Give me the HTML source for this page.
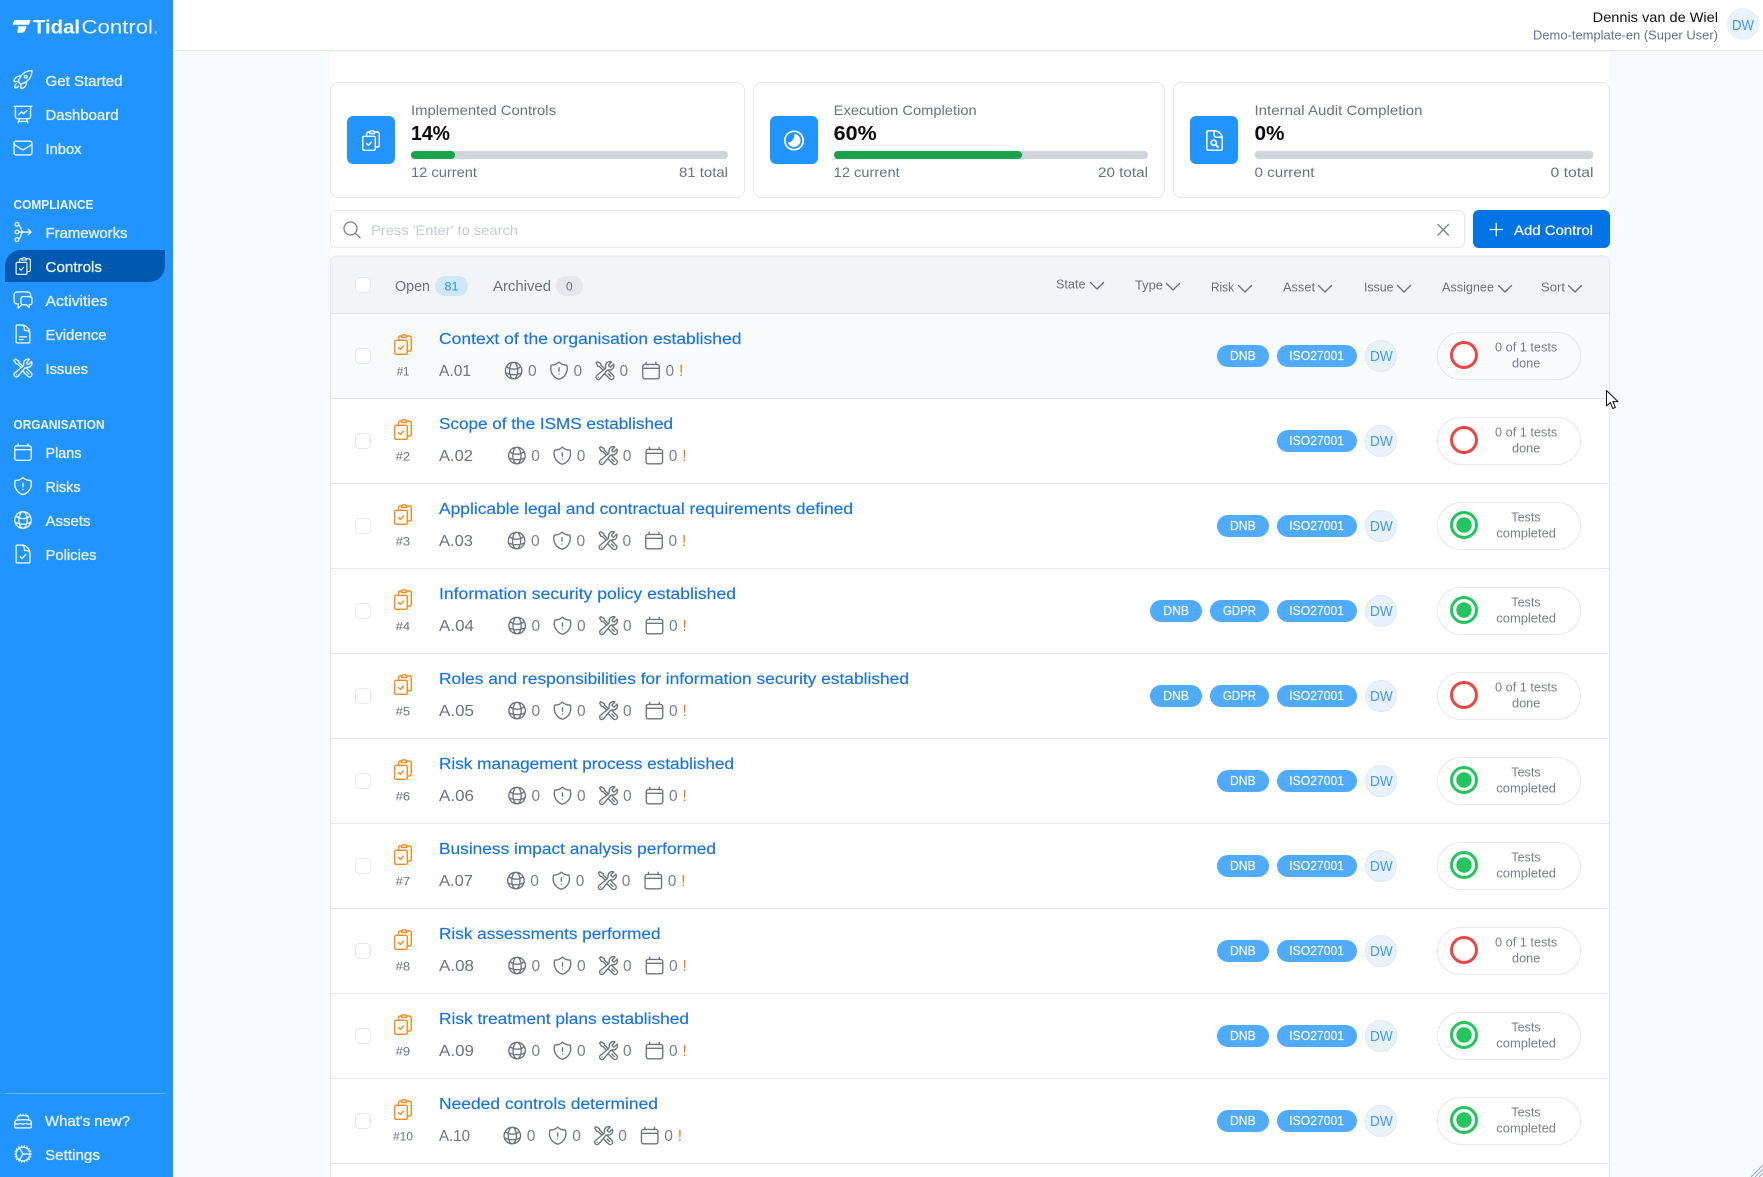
<!DOCTYPE html>
<html lang="en"><head><meta charset="utf-8"><title>TidalControl - Controls</title>
<style>
html,body{margin:0;padding:0;width:1763px;height:1177px;overflow:hidden;background:#f7fbff}
svg{display:block}
text{font-family:"Liberation Sans",sans-serif}
.i{fill:none;stroke:currentColor;stroke-width:1.5;stroke-linecap:round;stroke-linejoin:round}
.s{font-size:14.5px;fill:#e4f2ff;stroke:#e4f2ff;stroke-width:.35}
.h{font-size:12.5px;font-weight:700;fill:#eef7ff}
.lb{font-size:14px;fill:#6b7280}
.pc{font-size:20px;font-weight:700;fill:#0b0b0f}
.fl{font-size:12.5px;fill:#6b7280}
.tt{font-size:15.5px;fill:#1873e6;stroke:#1873e6;stroke-width:.15}
.cd{font-size:16px;fill:#6b7280}
.nm{font-size:12px;fill:#6b7280}
.z{font-size:15.5px;fill:#7a808c}
.o{font-size:15.5px;fill:#f97316}
.tg{font-size:12.5px;fill:#fff;stroke:#fff;stroke-width:.15}
.dw{font-size:15px;fill:#3b9bff}
.st{font-size:12.5px;fill:#7b7f87}
</style></head><body>
<svg xmlns="http://www.w3.org/2000/svg" width="1763" height="1177" viewBox="0 0 1763 1177">
<defs>
<symbol id="clip" viewBox="0 0 18 21" overflow="visible"><g fill="none" stroke="currentColor" stroke-width="1.4" stroke-linecap="round" stroke-linejoin="round"><rect x=".7" y="6.3" width="12.6" height="14" rx="1.4"/><path d="M4.6 6V3.6C4.6 2.7 5.3 2 6.2 2h1.5C8.1 1.2 9 .7 10 .7s1.9.5 2.3 1.3h3.1c1 0 1.9.7 1.9 1.6v11.8c0 .9-.9 1.6-1.9 1.6h-2"/><path d="M7.6 2v1.6h4.9V2"/><path d="M4.6 13.6l1.8 1.8 3-3.3" stroke-width="1.5"/></g></symbol>
<symbol id="rocket" viewBox="0 0 24 24"><path d="M15.59 14.37a6 6 0 0 1-5.84 7.38v-4.8m5.84-2.58a14.98 14.98 0 0 0 6.16-12.12A14.98 14.98 0 0 0 9.631 8.41m5.96 5.96a14.926 14.926 0 0 1-5.841 2.58m-.119-8.54a6 6 0 0 0-7.381 5.84h4.8m2.581-5.84a14.927 14.927 0 0 0-2.58 5.84m2.699 2.7c-.103.021-.207.041-.311.06a15.09 15.09 0 0 1-2.448-2.448 14.9 14.9 0 0 1 .06-.312m-2.24 2.39a4.493 4.493 0 0 0-1.757 4.306 4.493 4.493 0 0 0 4.306-1.758M16.5 9a1.5 1.5 0 1 1-3 0 1.5 1.5 0 0 1 3 0Z" class="i"/></symbol>
<symbol id="chart" viewBox="0 0 24 24"><path d="M3.75 3v11.25A2.25 2.25 0 0 0 6 16.5h2.25M3.75 3h-1.5m1.5 0h16.5m0 0h1.5m-1.5 0v11.25A2.25 2.25 0 0 1 18 16.5h-2.25m-7.5 0h7.5m-7.5 0-1 3m8.5-3 1 3m0 0 .5 1.5m-.5-1.5h-9.5m0 0-.5 1.5m.75-9 3-3 2.148 2.148A12.061 12.061 0 0 1 16.5 7.605" class="i"/></symbol>
<symbol id="env" viewBox="0 0 24 24"><path d="M21.75 6.75v10.5a2.25 2.25 0 0 1-2.25 2.25h-15a2.25 2.25 0 0 1-2.25-2.25V6.75m19.5 0A2.25 2.25 0 0 0 19.5 4.5h-15a2.25 2.25 0 0 0-2.25 2.25m19.5 0v.243a2.25 2.25 0 0 1-1.07 1.916l-7.5 4.615a2.25 2.25 0 0 1-2.36 0L3.32 8.91a2.25 2.25 0 0 1-1.07-1.916V6.75" class="i"/></symbol>
<symbol id="fw" viewBox="0 0 24 24"><g class="i"><circle cx="6.5" cy="3.6" r="2"/><circle cx="6.5" cy="12" r="2"/><circle cx="6.5" cy="20.4" r="2"/><path d="M8.3 4.6c3.4 1.4 2.2 7.4 5.2 7.4M8.3 19.4c3.4-1.4 2.2-7.4 5.2-7.4M8.5 12h13.3m-3-3 3 3-3 3"/></g></symbol>
<symbol id="chat" viewBox="0 0 24 24"><path d="M20.25 8.511c.884.284 1.5 1.128 1.5 2.097v4.286c0 1.136-.847 2.1-1.98 2.193-.34.027-.68.052-1.02.072v3.091l-3-3c-1.354 0-2.694-.055-4.02-.163a2.115 2.115 0 0 1-.825-.242m9.345-8.334a2.126 2.126 0 0 0-.476-.095 48.64 48.64 0 0 0-8.048 0c-1.131.094-1.976 1.057-1.976 2.192v4.286c0 .837.46 1.58 1.155 1.951m9.345-8.334V6.637c0-1.621-1.152-3.026-2.76-3.235A48.455 48.455 0 0 0 11.25 3c-2.115 0-4.198.137-6.24.402-1.608.209-2.76 1.614-2.76 3.235v6.226c0 1.621 1.152 3.026 2.76 3.235.577.075 1.157.14 1.74.194V21l4.155-4.155" class="i"/></symbol>
<symbol id="doc" viewBox="0 0 24 24"><path d="M19.5 14.25v-2.625a3.375 3.375 0 0 0-3.375-3.375h-1.5A1.125 1.125 0 0 1 13.5 7.125v-1.5a3.375 3.375 0 0 0-3.375-3.375H8.25m0 12.75h7.5m-7.5 3H12M10.5 2.25H5.625c-.621 0-1.125.504-1.125 1.125v17.25c0 .621.504 1.125 1.125 1.125h12.75c.621 0 1.125-.504 1.125-1.125V11.25a9 9 0 0 0-9-9Z" class="i"/></symbol>
<symbol id="doccheck" viewBox="0 0 24 24"><path d="M19.5 14.25v-2.625a3.375 3.375 0 0 0-3.375-3.375h-1.5A1.125 1.125 0 0 1 13.5 7.125v-1.5a3.375 3.375 0 0 0-3.375-3.375M9 15l2 2 4-4.5M10.5 2.25H5.625c-.621 0-1.125.504-1.125 1.125v17.25c0 .621.504 1.125 1.125 1.125h12.75c.621 0 1.125-.504 1.125-1.125V11.25a9 9 0 0 0-9-9Z" class="i"/></symbol>
<symbol id="tools" viewBox="0 0 24 24"><path d="M11.42 15.17 17.25 21A2.652 2.652 0 0 0 21 17.25l-5.877-5.877M11.42 15.17l2.496-3.03c.317-.384.74-.626 1.208-.766M11.42 15.17l-4.655 5.653a2.548 2.548 0 1 1-3.586-3.586l6.837-5.63m5.108-.233c.55-.164 1.163-.188 1.743-.14a4.5 4.5 0 0 0 4.486-6.336l-3.276 3.277a3.004 3.004 0 0 1-2.25-2.25l3.276-3.276a4.5 4.5 0 0 0-6.336 4.486c.091 1.076-.071 2.264-.904 2.95l-.102.085m-1.745 1.437L5.909 7.5H4.5L2.25 3.75l1.5-1.5L7.5 4.5v1.409l4.26 4.26m-1.745 1.437 1.745-1.437m6.615 8.206L15.75 15.75M4.867 19.125h.008v.008h-.008v-.008Z" class="i"/></symbol>
<symbol id="cal" viewBox="0 0 24 24"><path d="M6.75 3v2.25M17.25 3v2.25M3 18.75V7.5a2.25 2.25 0 0 1 2.25-2.25h13.5A2.25 2.25 0 0 1 21 7.5v11.25A2.25 2.25 0 0 1 18.75 21H5.25A2.25 2.25 0 0 1 3 18.75ZM3 9.5h18" class="i"/></symbol>
<symbol id="shield" viewBox="0 0 24 24"><path d="M12 9v3.75m0-10.036A11.959 11.959 0 0 1 3.598 6 11.99 11.99 0 0 0 3 9.75c0 5.592 3.824 10.29 9 11.622 5.176-1.332 9-6.03 9-11.622 0-1.31-.21-2.571-.598-3.751h-.152c-3.196 0-6.1-1.25-8.25-3.285Zm0 13.036h.008v.008H12v-.008Z" class="i"/></symbol>
<symbol id="globe" viewBox="0 0 24 24"><path d="M12 21a9.004 9.004 0 0 0 8.716-6.747M12 21a9.004 9.004 0 0 1-8.716-6.747M12 21c2.485 0 4.5-4.03 4.5-9S14.485 3 12 3m0 18c-2.485 0-4.5-4.03-4.5-9S9.515 3 12 3m0 0a8.997 8.997 0 0 1 7.843 4.582M12 3a8.997 8.997 0 0 0-7.843 4.582m15.686 0A11.953 11.953 0 0 1 12 10.5c-2.998 0-5.74-1.1-7.843-2.918m15.686 0A8.959 8.959 0 0 1 21 12c0 .778-.099 1.533-.284 2.253m0 0A17.919 17.919 0 0 1 12 16.5c-3.162 0-6.133-.815-8.716-2.247m0 0A9.004 9.004 0 0 1 3 12c0-1.605.42-3.113 1.157-4.418" class="i"/></symbol>
<symbol id="cake" viewBox="0 0 24 24"><path d="M12 8.25v-1.5m0 1.5c-1.355 0-2.697.056-4.024.166C6.845 8.51 6 9.473 6 10.608v2.513m6-4.871c1.355 0 2.697.056 4.024.166C17.155 8.51 18 9.473 18 10.608v2.513M15 8.25v-1.5m-6 1.5v-1.5m12 9.75-1.5.75a3.354 3.354 0 0 1-3 0 3.354 3.354 0 0 0-3 0 3.354 3.354 0 0 1-3 0 3.354 3.354 0 0 0-3 0 3.354 3.354 0 0 1-3 0L3 16.5m15-3.379a48.474 48.474 0 0 0-6-.371c-2.032 0-4.034.126-6 .371m12 0c.39.049.777.102 1.163.16 1.07.16 1.837 1.094 1.837 2.175v5.169c0 .621-.504 1.125-1.125 1.125H4.125A1.125 1.125 0 0 1 3 20.625v-5.17c0-1.08.768-2.014 1.837-2.174A47.78 47.78 0 0 1 6 13.12" class="i"/></symbol>
<symbol id="cog" viewBox="0 0 24 24"><path d="M4.5 12a7.5 7.5 0 0 0 15 0m-15 0a7.5 7.5 0 1 1 15 0m-15 0H3m16.5 0H21m-1.5 0H12m-8.457 3.077 1.41-.513m14.095-5.13 1.41-.513M5.106 17.785l1.15-.964m11.49-9.642 1.149-.964M7.501 19.795l.75-1.3m7.5-12.99.75-1.3m-6.063 16.658.26-1.477m2.605-14.772.26-1.477m0 17.726-.26-1.477M10.698 4.614l-.26-1.477M16.5 19.794l-.75-1.299M7.5 4.205 12 12m6.894 5.785-1.149-.964M6.256 7.178l-1.15-.964m15.352 8.864-1.41-.513M4.954 9.435l-1.41-.514M12.002 12l-3.75 6.495" class="i"/></symbol>
<g id="rowbase">
<rect x="355.5" y="35.5" width="15" height="15" rx="4" fill="#fff" stroke="#e5e7eb"/>
<use href="#clip" x="394" y="21" width="18" height="21" color="#f98a1e"/>
<rect x="1365.5" y="27.5" width="31" height="31" rx="15.5" fill="#e9f1fc" stroke="#e2e8f0"/>
<rect x="1437.5" y="19.5" width="143" height="47" rx="23.5" fill="none" stroke="#e5e7eb"/>
</g>
<g id="mi" color="#6f7580">
<use href="#globe" x="502.6" y="46.6" width="22" height="22"/>
<use href="#shield" x="548" y="46.6" width="22" height="22"/>
<use href="#tools" x="594" y="46.6" width="22" height="22"/>
<use href="#cal" x="640" y="46.6" width="22" height="22"/>
</g>
<g id="red"><circle cx="1464" cy="42" r="12.5" fill="#fff" stroke="#ef4444" stroke-width="3"/></g>
<g id="grn"><circle cx="1464" cy="42" r="12.5" fill="#fff" stroke="#22c55e" stroke-width="3"/><circle cx="1464" cy="42" r="7.7" fill="#22c55e"/></g>
<g id="tdnb"><rect x="1217" y="32" width="52" height="22" rx="11" fill="#4fabff"/></g>
<g id="tdnb2"><rect x="1150" y="32" width="52" height="22" rx="11" fill="#4fabff"/></g>
<g id="tgdpr"><rect x="1210" y="32" width="59" height="22" rx="11" fill="#4fabff"/></g>
<g id="tiso"><rect x="1277" y="32" width="80" height="22" rx="11" fill="#4fabff"/></g>
</defs>

<rect width="1763" height="1177" fill="#f7fbff"/>
<rect x="330" y="50" width="1280" height="1127" fill="#fefefe"/>
<rect x="173" y="0" width="1590" height="50" fill="#fff"/>
<rect x="173" y="50" width="1590" height="1" fill="#e5e7eb"/>
<rect x="173" y="51" width="1590" height="1" fill="#f3f4f6"/>
<text x="1592.7" y="22" font-size="14" fill="#111" textLength="125.3" lengthAdjust="spacingAndGlyphs">Dennis van de Wiel</text>
<text x="1533" y="39.5" font-size="12.5" fill="#6b7280" textLength="185" lengthAdjust="spacingAndGlyphs">Demo-template-en (Super User)</text>
<circle cx="1743" cy="24" r="16" fill="#e9f1fc"/>
<text x="1732" y="30" class="dw" textLength="22" lengthAdjust="spacingAndGlyphs">DW</text>

<rect width="173" height="1177" fill="#2294ff"/>
<path d="M15.5 20h14.3c.5 0 .8.4.6.9l-1.2 3.1c-.2.5-.6.8-1.1.8H13.2c-.5 0-.8-.4-.6-.9l1.5-2.9c.3-.6.8-1 1.4-1ZM18.3 26.2h7.6c.4 0 .7.4.5.8l-1.1 3c-.5 1.6-1.8 2.7-3.3 2.7h-4.2c-.4 0-.7-.4-.5-.8l1-5.700Z" fill="#fff"/>
<text x="33" y="33.5" font-size="19.5" font-weight="700" fill="#fff" textLength="47" lengthAdjust="spacingAndGlyphs">Tidal</text>
<text x="81.5" y="33.5" font-size="19.5" fill="#eef7ff" textLength="71.5" lengthAdjust="spacingAndGlyphs">Control</text>
<text x="153" y="33.5" font-size="19.5" fill="#a9d5ff">.</text>
<path d="M5 266a16 16 0 0 1 16-16h144v16a16 16 0 0 1-16 16H5Z" fill="#0059b0"/>
<g color="#e8f4ff">
<use href="#rocket" x="12" y="68.5" width="22" height="22"/>
<use href="#chart" x="12" y="103.5" width="22" height="22"/>
<use href="#env" x="12" y="137" width="22" height="22"/>
<use href="#fw" x="11" y="221" width="22" height="22"/>
<use href="#clip" x="15.5" y="257" width="15.5" height="18"/>
<use href="#chat" x="12" y="289" width="22" height="22"/>
<use href="#doc" x="12" y="323" width="22" height="22"/>
<use href="#tools" x="12" y="357" width="22" height="22"/>
<use href="#cal" x="12" y="441" width="22" height="22"/>
<use href="#shield" x="12" y="475" width="22" height="22"/>
<use href="#globe" x="12" y="509" width="22" height="22"/>
<use href="#doccheck" x="12" y="543" width="22" height="22"/>
<use href="#cake" x="12" y="1108" width="22" height="22"/>
<use href="#cog" x="12" y="1143" width="22" height="22"/>
</g>
<text x="45.5" y="86" class="s" textLength="77" lengthAdjust="spacingAndGlyphs">Get Started</text>
<text x="45.5" y="120" class="s" textLength="73" lengthAdjust="spacingAndGlyphs">Dashboard</text>
<text x="45.5" y="154" class="s" textLength="36" lengthAdjust="spacingAndGlyphs">Inbox</text>
<text x="13.5" y="209" class="h" textLength="80" lengthAdjust="spacingAndGlyphs">COMPLIANCE</text>
<text x="45.5" y="238" class="s" textLength="82" lengthAdjust="spacingAndGlyphs">Frameworks</text>
<text x="45.5" y="272" class="s" textLength="56.5" lengthAdjust="spacingAndGlyphs">Controls</text>
<text x="45.5" y="306" class="s" textLength="62" lengthAdjust="spacingAndGlyphs">Activities</text>
<text x="45.5" y="340" class="s" textLength="61" lengthAdjust="spacingAndGlyphs">Evidence</text>
<text x="45.5" y="374" class="s" textLength="42.5" lengthAdjust="spacingAndGlyphs">Issues</text>
<text x="13.5" y="429" class="h" textLength="91" lengthAdjust="spacingAndGlyphs">ORGANISATION</text>
<text x="45.5" y="458" class="s" textLength="36" lengthAdjust="spacingAndGlyphs">Plans</text>
<text x="45.5" y="492" class="s" textLength="35" lengthAdjust="spacingAndGlyphs">Risks</text>
<text x="45.5" y="526" class="s" textLength="45" lengthAdjust="spacingAndGlyphs">Assets</text>
<text x="45.5" y="560" class="s" textLength="51" lengthAdjust="spacingAndGlyphs">Policies</text>
<rect x="5" y="1093" width="160" height="1" fill="#fff" fill-opacity=".3"/>
<text x="45" y="1126" class="s" textLength="85" lengthAdjust="spacingAndGlyphs">What's new?</text>
<text x="45" y="1160" class="s" textLength="55" lengthAdjust="spacingAndGlyphs">Settings</text>

<rect x="330.5" y="82.5" width="414" height="115" rx="8" fill="#fff" stroke="#e5e7eb"/>
<rect x="347" y="116" width="48" height="48" rx="6" fill="#2294ff"/>
<use href="#clip" x="362" y="130" width="18" height="21" color="#fff"/>
<text x="411" y="115" class="lb" textLength="145" lengthAdjust="spacingAndGlyphs">Implemented Controls</text>
<text x="411" y="140" class="pc" textLength="39" lengthAdjust="spacingAndGlyphs">14%</text>
<rect x="411" y="151" width="317" height="8" rx="4" fill="#d1d5db"/>
<rect x="411" y="151" width="44" height="8" rx="4" fill="#16a34a"/>
<text x="411" y="177" class="lb" textLength="66" lengthAdjust="spacingAndGlyphs">12 current</text>
<text x="679" y="177" class="lb" textLength="49" lengthAdjust="spacingAndGlyphs">81 total</text>

<rect x="753.5" y="82.5" width="411" height="115" rx="8" fill="#fff" stroke="#e5e7eb"/>
<rect x="770" y="116" width="48" height="48" rx="6" fill="#2294ff"/>
<circle cx="794" cy="140.5" r="9.2" fill="none" stroke="#fff" stroke-width="1.7"/>
<path d="M794.5 134a6.5 6.5 0 1 1-6.7 8.4c3.6.4 6.9-3.6 6.7-8.4Z" fill="#fff"/>
<text x="833.7" y="115" class="lb" textLength="143" lengthAdjust="spacingAndGlyphs">Execution Completion</text>
<text x="833.7" y="140" class="pc" textLength="43" lengthAdjust="spacingAndGlyphs">60%</text>
<rect x="834" y="151" width="314" height="8" rx="4" fill="#d1d5db"/>
<rect x="834" y="151" width="188" height="8" rx="4" fill="#16a34a"/>
<text x="833.7" y="177" class="lb" textLength="66" lengthAdjust="spacingAndGlyphs">12 current</text>
<text x="1098" y="177" class="lb" textLength="50" lengthAdjust="spacingAndGlyphs">20 total</text>

<rect x="1173.5" y="82.5" width="436" height="115" rx="8" fill="#fff" stroke="#e5e7eb"/>
<rect x="1190" y="116" width="48" height="48" rx="6" fill="#2294ff"/>
<g fill="none" stroke="#fff" stroke-width="1.5" stroke-linecap="round" stroke-linejoin="round"><path d="M1214 130.8h-5.7c-.9 0-1.5.6-1.5 1.5v16.4c0 .9.6 1.5 1.5 1.5h12.4c.9 0 1.500-.6 1.500-1.5v-10.400c0-4.500-3.700-7.500-8.200-7.500Z"/><path d="M1214 130.8v4c0 1.400 1.100 2.500 2.500 2.500h5.500"/><circle cx="1213.8" cy="142.8" r="2.6" stroke-width="1.7"/><path d="M1216 145l2.300 2.300" stroke-width="1.7"/></g>
<text x="1254.5" y="115" class="lb" textLength="168" lengthAdjust="spacingAndGlyphs">Internal Audit Completion</text>
<text x="1254.5" y="140" class="pc" textLength="30" lengthAdjust="spacingAndGlyphs">0%</text>
<rect x="1254.5" y="151" width="339" height="8" rx="4" fill="#d1d5db"/>
<text x="1254.5" y="177" class="lb" textLength="60" lengthAdjust="spacingAndGlyphs">0 current</text>
<text x="1550.5" y="177" class="lb" textLength="43" lengthAdjust="spacingAndGlyphs">0 total</text>

<rect x="330.5" y="210.5" width="1134" height="37" rx="6" fill="#fff" stroke="#e5e7eb"/>
<g fill="none" stroke="#7a808c" stroke-width="1.3" stroke-linecap="round"><circle cx="350.5" cy="228.5" r="6.5"/><path d="M355.3 233.3l4.700 4.200"/><path d="M1438 224.500l10.500 10.500M1448.500 224.500l-10.500 10.500"/></g>
<text x="371" y="235" font-size="14" fill="#c6cad1" textLength="147" lengthAdjust="spacingAndGlyphs">Press 'Enter' to search</text>
<rect x="1473" y="210" width="137" height="38" rx="6" fill="#0073e6"/>
<path d="M1490 229.5h12.5M1496.25 223.25v12.5" stroke="#fff" stroke-width="1.3" stroke-linecap="round"/>
<text x="1514" y="235" font-size="14" fill="#fff" stroke="#fff" stroke-width=".2" textLength="79" lengthAdjust="spacingAndGlyphs">Add Control</text>

<path d="M330.5 1177V262a6 6 0 0 1 6-6h1267a6 6 0 0 1 6 6v915" fill="#fff" stroke="#e5e7eb"/>
<path d="M331 313V262a5.5 5.5 0 0 1 5.5-5.5h1267a5.5 5.5 0 0 1 5.5 5.5v51Z" fill="#f3f4f8"/>
<rect x="331" y="313" width="1278" height="85" fill="#f9fafb"/>
<rect x="355.5" y="277.5" width="15" height="15" rx="4" fill="#fff" stroke="#e5e7eb"/>
<text x="395" y="291" font-size="14.5" fill="#6b7280" textLength="35" lengthAdjust="spacingAndGlyphs">Open</text>
<rect x="435" y="276" width="33" height="20" rx="10" fill="#cfe8fc"/>
<text x="444.5" y="290.5" font-size="12" fill="#2294ff" textLength="14" lengthAdjust="spacingAndGlyphs">81</text>
<text x="493" y="291" font-size="14.5" fill="#6b7280" textLength="58" lengthAdjust="spacingAndGlyphs">Archived</text>
<rect x="556" y="276" width="27" height="20" rx="10" fill="#e5e7eb"/>
<text x="566" y="290.5" font-size="12" fill="#6b7280">0</text>
<text x="1056" y="288.5" class="fl" textLength="29.5" lengthAdjust="spacingAndGlyphs">State</text>
<text x="1135" y="289.5" class="fl" textLength="28" lengthAdjust="spacingAndGlyphs">Type</text>
<text x="1211" y="291.5" class="fl" textLength="23" lengthAdjust="spacingAndGlyphs">Risk</text>
<text x="1283" y="291.5" class="fl" textLength="32" lengthAdjust="spacingAndGlyphs">Asset</text>
<text x="1364" y="291.5" class="fl" textLength="29.5" lengthAdjust="spacingAndGlyphs">Issue</text>
<text x="1442" y="291.5" class="fl" textLength="52" lengthAdjust="spacingAndGlyphs">Assignee</text>
<text x="1541" y="291.5" class="fl" textLength="24" lengthAdjust="spacingAndGlyphs">Sort</text>
<g fill="none" stroke="#6b7280" stroke-width="1.3" stroke-linecap="round" stroke-linejoin="round">
<path d="M1090.5 282.5l6.5 6.5 6.5-6.5M1166.5 283.5l6.5 6.5 6.5-6.5M1238.5 285.5l6.5 6.5 6.5-6.5M1318.5 285.5l6.5 6.5 6.5-6.5M1397.5 285.5l6.5 6.5 6.5-6.5M1498.5 285.5l6.5 6.5 6.5-6.5M1568.5 285.5l6.5 6.5 6.5-6.5"/>
</g>
<g fill="#e5e7eb"><rect x="331" y="313" width="1278" height="1"/><rect x="331" y="398" width="1278" height="1"/><rect x="331" y="483" width="1278" height="1"/><rect x="331" y="568" width="1278" height="1"/><rect x="331" y="653" width="1278" height="1"/><rect x="331" y="738" width="1278" height="1"/><rect x="331" y="823" width="1278" height="1"/><rect x="331" y="908" width="1278" height="1"/><rect x="331" y="993" width="1278" height="1"/><rect x="331" y="1078" width="1278" height="1"/><rect x="331" y="1163" width="1278" height="1"/></g>

<g transform="translate(0,313)"><use href="#rowbase"/><use href="#tdnb"/><use href="#tiso"/><use href="#red"/>
<text x="439" y="31" class="tt" textLength="302.5" lengthAdjust="spacingAndGlyphs">Context of the organisation established</text>
<text x="396.7" y="62.7" class="nm" textLength="12.7" lengthAdjust="spacingAndGlyphs">#1</text>
<text x="439" y="63" class="cd" textLength="32" lengthAdjust="spacingAndGlyphs">A.01</text>
<g><use href="#mi"/><text x="528" y="63" class="z">0</text><text x="573.5" y="63" class="z">0</text><text x="619.5" y="63" class="z">0</text><text x="665.5" y="63" class="z">0</text><text x="679" y="63" class="o">!</text></g>
<text x="1230" y="47.2" class="tg" textLength="25.7" lengthAdjust="spacingAndGlyphs">DNB</text><text x="1289.3" y="47.2" class="tg" textLength="54.7" lengthAdjust="spacingAndGlyphs">ISO27001</text><text x="1370" y="48" class="dw" textLength="22.7" lengthAdjust="spacingAndGlyphs">DW</text>
<text x="1495" y="38.3" class="st" textLength="62.3" lengthAdjust="spacingAndGlyphs">0 of 1 tests</text><text x="1512" y="54.3" class="st" textLength="28.3" lengthAdjust="spacingAndGlyphs">done</text></g>

<g transform="translate(0,398)"><use href="#rowbase"/><use href="#tiso"/><use href="#red"/>
<text x="439" y="31" class="tt" textLength="234" lengthAdjust="spacingAndGlyphs">Scope of the ISMS established</text>
<text x="395.7" y="62.7" class="nm" textLength="14.5" lengthAdjust="spacingAndGlyphs">#2</text>
<text x="439" y="63" class="cd" textLength="34" lengthAdjust="spacingAndGlyphs">A.02</text>
<g transform="translate(3.3,0)"><use href="#mi"/><text x="528" y="63" class="z">0</text><text x="573.5" y="63" class="z">0</text><text x="619.5" y="63" class="z">0</text><text x="665.5" y="63" class="z">0</text><text x="679" y="63" class="o">!</text></g>
<text x="1289.3" y="47.2" class="tg" textLength="54.7" lengthAdjust="spacingAndGlyphs">ISO27001</text><text x="1370" y="48" class="dw" textLength="22.7" lengthAdjust="spacingAndGlyphs">DW</text>
<text x="1495" y="38.3" class="st" textLength="62.3" lengthAdjust="spacingAndGlyphs">0 of 1 tests</text><text x="1512" y="54.3" class="st" textLength="28.3" lengthAdjust="spacingAndGlyphs">done</text></g>

<g transform="translate(0,483)"><use href="#rowbase"/><use href="#tdnb"/><use href="#tiso"/><use href="#grn"/>
<text x="439" y="31" class="tt" textLength="414" lengthAdjust="spacingAndGlyphs">Applicable legal and contractual requirements defined</text>
<text x="395.7" y="62.7" class="nm" textLength="14.5" lengthAdjust="spacingAndGlyphs">#3</text>
<text x="439" y="63" class="cd" textLength="34" lengthAdjust="spacingAndGlyphs">A.03</text>
<g transform="translate(3,0)"><use href="#mi"/><text x="528" y="63" class="z">0</text><text x="573.5" y="63" class="z">0</text><text x="619.5" y="63" class="z">0</text><text x="665.5" y="63" class="z">0</text><text x="679" y="63" class="o">!</text></g>
<text x="1230" y="47.2" class="tg" textLength="25.7" lengthAdjust="spacingAndGlyphs">DNB</text><text x="1289.3" y="47.2" class="tg" textLength="54.7" lengthAdjust="spacingAndGlyphs">ISO27001</text><text x="1370" y="48" class="dw" textLength="22.7" lengthAdjust="spacingAndGlyphs">DW</text>
<text x="1511.3" y="38.3" class="st" textLength="29.3" lengthAdjust="spacingAndGlyphs">Tests</text><text x="1496.3" y="54.3" class="st" textLength="59.7" lengthAdjust="spacingAndGlyphs">completed</text></g>

<g transform="translate(0,568)"><use href="#rowbase"/><use href="#tdnb2"/><use href="#tgdpr"/><use href="#tiso"/><use href="#grn"/>
<text x="439" y="31" class="tt" textLength="297" lengthAdjust="spacingAndGlyphs">Information security policy established</text>
<text x="395.7" y="62.7" class="nm" textLength="14.5" lengthAdjust="spacingAndGlyphs">#4</text>
<text x="439" y="63" class="cd" textLength="35" lengthAdjust="spacingAndGlyphs">A.04</text>
<g transform="translate(3.5,0)"><use href="#mi"/><text x="528" y="63" class="z">0</text><text x="573.5" y="63" class="z">0</text><text x="619.5" y="63" class="z">0</text><text x="665.5" y="63" class="z">0</text><text x="679" y="63" class="o">!</text></g>
<text x="1163.3" y="47.2" class="tg" textLength="25.7" lengthAdjust="spacingAndGlyphs">DNB</text><text x="1223" y="47.2" class="tg" textLength="33" lengthAdjust="spacingAndGlyphs">GDPR</text><text x="1289.3" y="47.2" class="tg" textLength="54.7" lengthAdjust="spacingAndGlyphs">ISO27001</text><text x="1370" y="48" class="dw" textLength="22.7" lengthAdjust="spacingAndGlyphs">DW</text>
<text x="1511.3" y="38.3" class="st" textLength="29.3" lengthAdjust="spacingAndGlyphs">Tests</text><text x="1496.3" y="54.3" class="st" textLength="59.7" lengthAdjust="spacingAndGlyphs">completed</text></g>

<g transform="translate(0,653)"><use href="#rowbase"/><use href="#tdnb2"/><use href="#tgdpr"/><use href="#tiso"/><use href="#red"/>
<text x="439" y="31" class="tt" textLength="470" lengthAdjust="spacingAndGlyphs">Roles and responsibilities for information security established</text>
<text x="395.7" y="62.7" class="nm" textLength="14.5" lengthAdjust="spacingAndGlyphs">#5</text>
<text x="439" y="63" class="cd" textLength="35" lengthAdjust="spacingAndGlyphs">A.05</text>
<g transform="translate(3.5,0)"><use href="#mi"/><text x="528" y="63" class="z">0</text><text x="573.5" y="63" class="z">0</text><text x="619.5" y="63" class="z">0</text><text x="665.5" y="63" class="z">0</text><text x="679" y="63" class="o">!</text></g>
<text x="1163.3" y="47.2" class="tg" textLength="25.7" lengthAdjust="spacingAndGlyphs">DNB</text><text x="1223" y="47.2" class="tg" textLength="33" lengthAdjust="spacingAndGlyphs">GDPR</text><text x="1289.3" y="47.2" class="tg" textLength="54.7" lengthAdjust="spacingAndGlyphs">ISO27001</text><text x="1370" y="48" class="dw" textLength="22.7" lengthAdjust="spacingAndGlyphs">DW</text>
<text x="1495" y="38.3" class="st" textLength="62.3" lengthAdjust="spacingAndGlyphs">0 of 1 tests</text><text x="1512" y="54.3" class="st" textLength="28.3" lengthAdjust="spacingAndGlyphs">done</text></g>

<g transform="translate(0,738)"><use href="#rowbase"/><use href="#tdnb"/><use href="#tiso"/><use href="#grn"/>
<text x="439" y="31" class="tt" textLength="295" lengthAdjust="spacingAndGlyphs">Risk management process established</text>
<text x="395.7" y="62.7" class="nm" textLength="14.5" lengthAdjust="spacingAndGlyphs">#6</text>
<text x="439" y="63" class="cd" textLength="35" lengthAdjust="spacingAndGlyphs">A.06</text>
<g transform="translate(3.5,0)"><use href="#mi"/><text x="528" y="63" class="z">0</text><text x="573.5" y="63" class="z">0</text><text x="619.5" y="63" class="z">0</text><text x="665.5" y="63" class="z">0</text><text x="679" y="63" class="o">!</text></g>
<text x="1230" y="47.2" class="tg" textLength="25.7" lengthAdjust="spacingAndGlyphs">DNB</text><text x="1289.3" y="47.2" class="tg" textLength="54.7" lengthAdjust="spacingAndGlyphs">ISO27001</text><text x="1370" y="48" class="dw" textLength="22.7" lengthAdjust="spacingAndGlyphs">DW</text>
<text x="1511.3" y="38.3" class="st" textLength="29.3" lengthAdjust="spacingAndGlyphs">Tests</text><text x="1496.3" y="54.3" class="st" textLength="59.7" lengthAdjust="spacingAndGlyphs">completed</text></g>

<g transform="translate(0,823)"><use href="#rowbase"/><use href="#tdnb"/><use href="#tiso"/><use href="#grn"/>
<text x="439" y="31" class="tt" textLength="277" lengthAdjust="spacingAndGlyphs">Business impact analysis performed</text>
<text x="395.7" y="62.7" class="nm" textLength="14.5" lengthAdjust="spacingAndGlyphs">#7</text>
<text x="439" y="63" class="cd" textLength="34" lengthAdjust="spacingAndGlyphs">A.07</text>
<g transform="translate(2.3,0)"><use href="#mi"/><text x="528" y="63" class="z">0</text><text x="573.5" y="63" class="z">0</text><text x="619.5" y="63" class="z">0</text><text x="665.5" y="63" class="z">0</text><text x="679" y="63" class="o">!</text></g>
<text x="1230" y="47.2" class="tg" textLength="25.7" lengthAdjust="spacingAndGlyphs">DNB</text><text x="1289.3" y="47.2" class="tg" textLength="54.7" lengthAdjust="spacingAndGlyphs">ISO27001</text><text x="1370" y="48" class="dw" textLength="22.7" lengthAdjust="spacingAndGlyphs">DW</text>
<text x="1511.3" y="38.3" class="st" textLength="29.3" lengthAdjust="spacingAndGlyphs">Tests</text><text x="1496.3" y="54.3" class="st" textLength="59.7" lengthAdjust="spacingAndGlyphs">completed</text></g>

<g transform="translate(0,908)"><use href="#rowbase"/><use href="#tdnb"/><use href="#tiso"/><use href="#red"/>
<text x="439" y="31" class="tt" textLength="221.5" lengthAdjust="spacingAndGlyphs">Risk assessments performed</text>
<text x="395.7" y="62.7" class="nm" textLength="14.5" lengthAdjust="spacingAndGlyphs">#8</text>
<text x="439" y="63" class="cd" textLength="35" lengthAdjust="spacingAndGlyphs">A.08</text>
<g transform="translate(3.5,0)"><use href="#mi"/><text x="528" y="63" class="z">0</text><text x="573.5" y="63" class="z">0</text><text x="619.5" y="63" class="z">0</text><text x="665.5" y="63" class="z">0</text><text x="679" y="63" class="o">!</text></g>
<text x="1230" y="47.2" class="tg" textLength="25.7" lengthAdjust="spacingAndGlyphs">DNB</text><text x="1289.3" y="47.2" class="tg" textLength="54.7" lengthAdjust="spacingAndGlyphs">ISO27001</text><text x="1370" y="48" class="dw" textLength="22.7" lengthAdjust="spacingAndGlyphs">DW</text>
<text x="1495" y="38.3" class="st" textLength="62.3" lengthAdjust="spacingAndGlyphs">0 of 1 tests</text><text x="1512" y="54.3" class="st" textLength="28.3" lengthAdjust="spacingAndGlyphs">done</text></g>

<g transform="translate(0,993)"><use href="#rowbase"/><use href="#tdnb"/><use href="#tiso"/><use href="#grn"/>
<text x="439" y="31" class="tt" textLength="250" lengthAdjust="spacingAndGlyphs">Risk treatment plans established</text>
<text x="395.7" y="62.7" class="nm" textLength="14.5" lengthAdjust="spacingAndGlyphs">#9</text>
<text x="439" y="63" class="cd" textLength="35" lengthAdjust="spacingAndGlyphs">A.09</text>
<g transform="translate(3.5,0)"><use href="#mi"/><text x="528" y="63" class="z">0</text><text x="573.5" y="63" class="z">0</text><text x="619.5" y="63" class="z">0</text><text x="665.5" y="63" class="z">0</text><text x="679" y="63" class="o">!</text></g>
<text x="1230" y="47.2" class="tg" textLength="25.7" lengthAdjust="spacingAndGlyphs">DNB</text><text x="1289.3" y="47.2" class="tg" textLength="54.7" lengthAdjust="spacingAndGlyphs">ISO27001</text><text x="1370" y="48" class="dw" textLength="22.7" lengthAdjust="spacingAndGlyphs">DW</text>
<text x="1511.3" y="38.3" class="st" textLength="29.3" lengthAdjust="spacingAndGlyphs">Tests</text><text x="1496.3" y="54.3" class="st" textLength="59.7" lengthAdjust="spacingAndGlyphs">completed</text></g>

<g transform="translate(0,1078)"><use href="#rowbase"/><use href="#tdnb"/><use href="#tiso"/><use href="#grn"/>
<text x="439" y="31" class="tt" textLength="219" lengthAdjust="spacingAndGlyphs">Needed controls determined</text>
<text x="393" y="62.7" class="nm" textLength="20" lengthAdjust="spacingAndGlyphs">#10</text>
<text x="439" y="63" class="cd" textLength="31" lengthAdjust="spacingAndGlyphs">A.10</text>
<g transform="translate(-1.3,0)"><use href="#mi"/><text x="528" y="63" class="z">0</text><text x="573.5" y="63" class="z">0</text><text x="619.5" y="63" class="z">0</text><text x="665.5" y="63" class="z">0</text><text x="679" y="63" class="o">!</text></g>
<text x="1230" y="47.2" class="tg" textLength="25.7" lengthAdjust="spacingAndGlyphs">DNB</text><text x="1289.3" y="47.2" class="tg" textLength="54.7" lengthAdjust="spacingAndGlyphs">ISO27001</text><text x="1370" y="48" class="dw" textLength="22.7" lengthAdjust="spacingAndGlyphs">DW</text>
<text x="1511.3" y="38.3" class="st" textLength="29.3" lengthAdjust="spacingAndGlyphs">Tests</text><text x="1496.3" y="54.3" class="st" textLength="59.7" lengthAdjust="spacingAndGlyphs">completed</text></g>

<path d="M1606.5 390.5v15.5l3.8-3.5 2.5 6 2.6-1.100-2.500-5.800h5.100Z" fill="#fff" stroke="#111" stroke-width="1" stroke-linejoin="round"/>
<path d="M1751 1177l12-12M1755 1177l8-8M1759 1177l4-4" stroke="#9ca3af" stroke-width="1"/>
</svg>
</body></html>
